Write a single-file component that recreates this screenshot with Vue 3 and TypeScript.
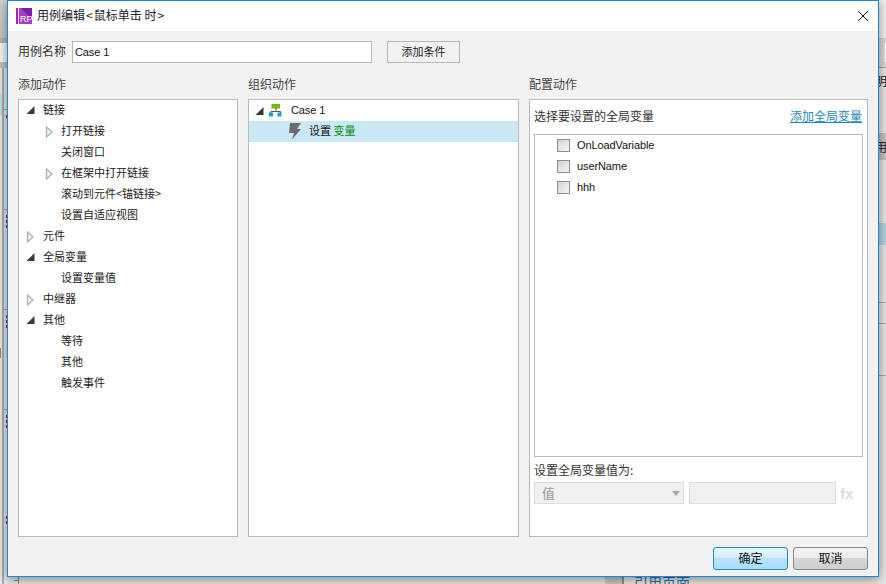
<script setup lang="ts">
interface TreeRow { label: string; level: 1 | 2; icon: 'open' | 'closed' | 'none' }

const tree: TreeRow[] = [
  { label: '链接', level: 1, icon: 'open' },
  { label: '打开链接', level: 2, icon: 'closed' },
  { label: '关闭窗口', level: 2, icon: 'none' },
  { label: '在框架中打开链接', level: 2, icon: 'closed' },
  { label: '滚动到元件<锚链接>', level: 2, icon: 'none' },
  { label: '设置自适应视图', level: 2, icon: 'none' },
  { label: '元件', level: 1, icon: 'closed' },
  { label: '全局变量', level: 1, icon: 'open' },
  { label: '设置变量值', level: 2, icon: 'none' },
  { label: '中继器', level: 1, icon: 'closed' },
  { label: '其他', level: 1, icon: 'open' },
  { label: '等待', level: 2, icon: 'none' },
  { label: '其他', level: 2, icon: 'none' },
  { label: '触发事件', level: 2, icon: 'none' },
]
const variables: string[] = ['OnLoadVariable', 'userName', 'hhh']
const leftRules: number[] = [109, 209, 309, 409]
const leftDots: number[] = [115, 215, 220, 225, 315, 320, 325, 415, 420, 425, 516, 521]
</script>

<template>
  <div class="desk">
    <div class="behind">
      <div class="b-left b-l1"></div>
      <div class="b-left b-l2"></div>
      <div class="b-left b-l3"></div>
      <div class="b-left b-l4"></div>
      <div class="b-vline"></div>
      <div class="b-chunk"></div>
      <i v-for="y in leftRules" :key="'r' + y" class="left-rule" :style="{ top: y + 'px' }"></i>
      <i v-for="y in leftDots" :key="'d' + y" class="dot" :style="{ top: y + 'px' }"></i>
      <div class="b-right r1"></div>
      <div class="b-right r2"></div>
      <div class="b-right r3"></div>
      <div class="b-right r4"></div>
      <div class="b-right r5"></div>
      <div class="b-right r6"></div>
      <div class="b-right r7"></div>
      <div class="b-right r8"></div>
      <div class="b-field"></div>
      <span class="b-text t1">明</span>
      <span class="b-text t2">用</span>
      <div class="b-col"></div>
      <div class="b-foot"></div>
      <span class="b-text t3">引用页面</span>
    </div>

    <section class="dialog">
      <header class="titlebar">
        <span class="logo">
          <i class="logo-bar"></i>
          <span class="logo-box"><span class="logo-text">RP</span></span>
        </span>
        <span class="title">用例编辑<span class="ang">&lt;</span>鼠标单击 时<span class="ang">&gt;</span></span>
        <svg class="close" width="12" height="12" viewBox="0 0 12 12">
          <path d="M1 1 L11 11 M11 1 L1 11" stroke="#111" stroke-width="1" fill="none" />
        </svg>
      </header>

      <div class="content">
        <div class="name-row">
          <label>用例名称</label>
          <div class="name-input latin">Case 1</div>
          <button class="plain-btn">添加条件</button>
        </div>

        <div class="columns">
          <div class="column">
            <h3 class="heading">添加动作</h3>
            <div class="panel">
              <div v-for="(row, i) in tree" :key="i" class="row" :class="row.level === 1 ? 'lv1' : 'lv2'">
                <svg v-if="row.icon === 'open'" class="tri" width="10" height="10" viewBox="0 0 10 10">
                  <polygon points="8.5,1 8.5,9 0.5,9" fill="#3a3a3a" />
                </svg>
                <svg v-else-if="row.icon === 'closed'" class="tri" width="10" height="12" viewBox="0 0 10 12">
                  <polygon points="1.5,1 7,6 1.5,11" fill="#f4f4f4" stroke="#b4b4b4" stroke-width="1.4" />
                </svg>
                <span class="row-label">{{ row.label }}</span>
              </div>
            </div>
          </div>

          <div class="column">
            <h3 class="heading">组织动作</h3>
            <div class="panel">
              <div class="case-row">
                <svg class="case-tri" width="10" height="10" viewBox="0 0 10 10">
                  <polygon points="8.5,1 8.5,9 0.5,9" fill="#3a3a3a" />
                </svg>
                <svg class="flow" width="14" height="13" viewBox="0 0 14 13">
                  <rect x="2.5" y="0" width="8.5" height="4.5" fill="#76b900" />
                  <path d="M7 4 V7.5 M2 9 V7.5 H11.5 V9" stroke="#555" stroke-width="1" fill="none" />
                  <rect x="0" y="8.5" width="4" height="4" fill="#1a9ddc" />
                  <rect x="8.5" y="8.5" width="4" height="4" fill="#1a9ddc" />
                </svg>
                <span class="latin case-name">Case 1</span>
              </div>
              <div class="action-row">
                <svg class="bolt" width="13" height="17" viewBox="0 0 13 17">
                  <polygon points="1,0 12,0 8,6 12,6 3,16.5 5,10 0,10" fill="#6b6b6b" />
                </svg>
                <span class="up">设置 <em class="green">变量</em></span>
              </div>
            </div>
          </div>

          <div class="column">
            <h3 class="heading">配置动作</h3>
            <div class="panel config">
              <div class="config-head">
                <span>选择要设置的全局变量</span>
                <a class="link">添加全局变量</a>
              </div>
              <div class="var-list">
                <div v-for="v in variables" :key="v" class="var-row">
                  <span class="check"></span>
                  <span class="latin">{{ v }}</span>
                </div>
              </div>
              <div class="value-label">设置全局变量值为:</div>
              <div class="value-row">
                <div class="select">
                  <span class="val">值</span>
                  <svg width="8" height="5" viewBox="0 0 8 5"><polygon points="0,0 8,0 4,5" fill="#a8a8a8" /></svg>
                </div>
                <div class="text-field"></div>
                <span class="fx">fx</span>
              </div>
            </div>
          </div>
        </div>

        <footer class="footer">
          <button class="dlg-btn primary">确定</button>
          <button class="dlg-btn">取消</button>
        </footer>
      </div>
    </section>
  </div>
</template>

<style>
html, body { margin: 0; padding: 0; background: #e8e8e8; overflow: hidden; }
</style>

<style scoped>
* { box-sizing: border-box; }
.desk {
  position: relative;
  width: 886px;
  height: 584px;
  overflow: hidden;
  padding-left: 7px;
  background: #e6e6e6;
  font-family: "Noto Sans CJK SC", "Liberation Sans", sans-serif;
  font-size: 12px;
  color: #222;
}
.behind { position: absolute; inset: 0; }
.b-left { position: absolute; left: 0; width: 7px; }
.b-l1 { top: 0; height: 43px; background: linear-gradient(#d2d2d2, #c6c6c6 88%, #b4b4b4 88%); }
.b-l2 { top: 43px; height: 19px; background: #f4f4f4; }
.b-l3 { top: 62px; height: 6px; background: #bfbfbf; }
.b-l4 { top: 93px; width: 3px; height: 22px; background: #c4dfea; }
.b-vline { position: absolute; left: 2px; top: 68px; width: 2px; height: 516px; background: #ababab; }
.b-chunk { position: absolute; left: 0; top: 348px; width: 1px; height: 10px; background: #8a8a8a; }
.left-rule { position: absolute; left: 4px; width: 3px; height: 1px; background: #a8a8a8; }
.dot { position: absolute; left: 6px; width: 1px; height: 3px; background: #8c2b4c; }
.b-right { position: absolute; left: 879px; right: 0; }
.r1 { top: 0; height: 38px; background: #f2f2f2; }
.r2 { top: 38px; height: 29px; background: #dadada; }
.r3 { top: 67px; height: 1px; background: #a8a8a8; }
.r4 { top: 133px; height: 27px; background: #c2c2c2; }
.r5 { top: 223px; height: 22px; background: #b4d2df; }
.r6 { top: 302px; height: 1px; background: #a8a8a8; }
.r7 { top: 323px; height: 1px; background: #a8a8a8; }
.r8 { top: 375px; height: 1px; background: #a8a8a8; }
.b-field { position: absolute; left: 885px; top: 43px; width: 1px; height: 19px; background: #fff; }
.b-text { position: absolute; color: #222; line-height: 14px; }
.t1 { left: 875px; top: 74px; }
.t2 { left: 875px; top: 140px; }
.b-col { position: absolute; left: 605px; top: 577px; width: 19px; height: 7px; background: #c9c9c9; border-right: 2px solid #8f8f8f; }
.b-foot { position: absolute; left: 14px; top: 577px; width: 5px; height: 7px; border-right: 1px solid #8f8f8f; border-top: 0; background: linear-gradient(transparent 3px, #8f8f8f 3px, #8f8f8f 4px, transparent 4px); }
.t3 { left: 634px; top: 575px; color: #2a6fa8; font-size: 14px; }

.dialog {
  position: relative;
  width: 872px;
  height: 577px;
  display: flex;
  flex-direction: column;
  border: 1px solid #1c88d8;
  background: #f2f2f2;
  box-shadow: 0 2px 10px rgba(0, 0, 0, 0.45);
}
.titlebar {
  height: 30px;
  flex: none;
  background: #fff;
  display: flex;
  align-items: center;
  padding-left: 8px;
  padding-right: 9px;
}
.logo { display: flex; gap: 1px; height: 16px; }
.logo-bar { width: 2px; background: #a424bf; }
.logo-box {
  width: 13px;
  height: 16px;
  background: linear-gradient(45deg, #a83cd0 60%, #7d1fa6 60%);
  position: relative;
  overflow: hidden;
}
.logo-text {
  position: absolute;
  left: 1px;
  bottom: 0;
  font-family: "Liberation Sans", sans-serif;
  font-size: 9px;
  line-height: 9px;
  color: #fff;
}
.title { margin-left: 5px; flex: 1; color: #222; line-height: 14px; position: relative; top: -1px; }
.ang { margin: 0 1px; }
.ang:last-child { margin-right: 0; }
.close { flex: none; }

.content { flex: 1; display: flex; flex-direction: column; padding: 10px 10px 0; min-height: 0; }
.name-row { display: flex; align-items: center; height: 22px; }
.name-row label { width: 54px; color: #333; line-height: 20px; height: 22px; }
.name-input {
  width: 300px;
  height: 22px;
  background: #fff;
  border: 1px solid #b8b8b8;
  padding-left: 2px;
  line-height: 20px;
}
.latin { font-family: "Liberation Sans", sans-serif; font-size: 11px; letter-spacing: -0.1px; color: #111; }
.plain-btn {
  margin-left: 15px;
  width: 73px;
  height: 22px;
  padding: 0 0 2px;
  background: #f2f2f2;
  border: 1px solid #b8b8b8;
  font-family: inherit;
  font-size: 11px;
  color: #222;
}
.columns { flex: none; height: 474px; display: grid; grid-template-columns: 220px 271px 339px; gap: 10px; }
.column { display: flex; flex-direction: column; min-height: 0; }
.heading { margin: 0; height: 36px; padding-top: 12px; line-height: 17px; font-size: 12px; font-weight: 400; color: #444; }
.panel { flex: 1; background: #fff; border: 1px solid #b8b8b8; min-height: 0; }

.row { position: relative; height: 21px; line-height: 19px; font-size: 11px; color: #222; }
.lv1 { padding-left: 24px; }
.lv2 { padding-left: 42px; }
.tri { position: absolute; top: 5px; }
.lv1 .tri { left: 7px; }
.lv2 .tri { left: 26px; top: 5px; }

.case-row { display: flex; align-items: center; height: 21px; position: relative; }
.case-tri { margin-left: 6px; }
.flow { margin-left: 4px; }
.case-name { margin-left: 8px; line-height: 21px; height: 21px; }
.action-row {
  position: relative;
  height: 21px;
  line-height: 19px;
  font-size: 11px;
  background: #c9e8f6;
  padding-left: 60px;
  color: #111;
}
.bolt { position: absolute; left: 40px; top: 2px; }
.green { font-style: normal; color: #0a8c0a; }

.config { display: flex; flex-direction: column; padding: 0 4px; }
.config-head { display: flex; justify-content: space-between; align-items: flex-start; height: 34px; padding: 7px 1px 0 0; line-height: 17px; flex: none; color: #333; }
.link { color: #1a8ab5; text-decoration: underline; }
.var-list { height: 323px; flex: none; background: #fff; border: 1px solid #b8b8b8; }
.var-row { display: flex; align-items: center; height: 21px; padding-left: 22px; }
.var-row .latin { line-height: 21px; height: 21px; }
.check {
  width: 13px;
  height: 13px;
  margin-right: 7px;
  border: 1px solid #8e8e8e;
  background: linear-gradient(135deg, #d2d2d2, #f6f6f6);
}
.value-label { height: 17px; margin-top: 4px; line-height: 17px; color: #333; flex: none; }
.value-row { display: flex; align-items: center; margin-top: 4px; flex: none; }
.select {
  width: 150px;
  height: 22px;
  background: #f0f0f0;
  border: 1px solid #dcdcdc;
  padding: 0 3px 0 7px;
  color: #9a9a9a;
  font-size: 13px;
  display: flex;
  align-items: center;
  justify-content: space-between;
}
.val { position: relative; top: -1px; }
.text-field { width: 147px; height: 22px; margin-left: 5px; background: #f0f0f0; border: 1px solid #dcdcdc; }
.fx { margin-left: 4px; font-family: "Liberation Sans", sans-serif; font-weight: 700; font-size: 15px; color: #dcdcdc; }

.footer { display: flex; justify-content: flex-end; gap: 5px; margin-top: 10px; }
.dlg-btn {
  width: 75px;
  height: 23px;
  padding: 0 0 2px;
  border: 1px solid #8a8a8a;
  border-radius: 3px;
  background: linear-gradient(#f3f3f3 0%, #ececec 45%, #d6d6d6 50%, #cfcfcf 100%);
  font-family: inherit;
  font-size: 12px;
  color: #111;
}
.primary {
  border: 1px solid #1d8cc8;
  background: linear-gradient(#e6f5fd 0%, #d5eefb 45%, #b9e3fa 50%, #a9dcf8 100%);
}
</style>
